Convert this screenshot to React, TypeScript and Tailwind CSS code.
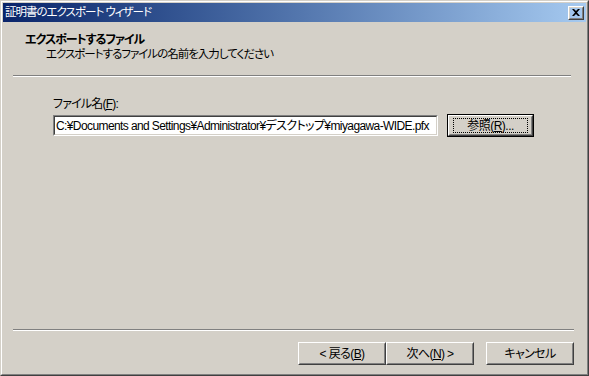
import React from 'react';

const font = {
  fontFamily: '"Liberation Sans", "Noto Sans CJK JP", sans-serif',
  fontFeatureSettings: '"palt"',
};

// Win2000 style push button
const Btn = ({ children, className = '' }: { children: React.ReactNode; className?: string }) => (
  <div className={`border border-t-white border-l-white border-r-[#404040] border-b-[#404040] ${className}`}>
    <div className="h-full w-full border border-t-[#d4d0c8] border-l-[#d4d0c8] border-r-[#808080] border-b-[#808080] flex items-center justify-center text-[12px] text-black whitespace-nowrap">
      {children}
    </div>
  </div>
);

export default function App() {
  return (
    <div
      style={font}
      className="w-[589px] h-[376px] bg-[#d4d0c8] border-t border-l border-t-[#d4d0c8] border-l-[#d4d0c8] border-r border-b border-r-[#404040] border-b-[#404040] overflow-hidden"
    >
      <div className="h-full w-full border border-t-white border-l-white border-r-[#808080] border-b-[#808080] p-px flex flex-col">
        {/* title bar */}
        <div className="h-[19px] flex items-center justify-between pl-[2px] pr-[2px] bg-gradient-to-r from-[#0a246a] to-[#a6caf0]">
          <span className="text-white text-[11.5px] leading-none tracking-[-1px]">証明書のエクスポート ウィザード</span>
          <Btn className="w-[16px] h-[14px]">
            <svg width="8" height="7" viewBox="0 0 8 7">
              <path d="M0 0h2l2 2 2-2h2L5 3.5 8 7H6L4 5 2 7H0l3-3.5z" fill="#000" />
            </svg>
          </Btn>
        </div>

        {/* header */}
        <div className="pl-[22px] pt-[11px] h-[53px]">
          <div className="text-[12px] font-bold leading-[14px] text-black tracking-[-1px]">エクスポートするファイル</div>
          <div className="text-[11.5px] leading-[14px] text-black pl-[21px] tracking-[-1px]">エクスポートするファイルの名前を入力してください</div>
        </div>
        <div className="mx-[10px] mr-[15px] border-t border-t-[#808080] border-b border-b-white" />

        {/* body */}
        <div className="flex-1 pl-[50px] pt-[20px]">
          <div className="text-[12px] leading-[14px] text-black tracking-[-0.8px]">
            ファイル名(<span className="underline">F</span>):
          </div>
          <div className="flex items-center mt-[3px]">
            <div className="w-[385px] h-[21px] border border-t-[#808080] border-l-[#808080] border-r-white border-b-white">
              <div className="h-full w-full border border-t-[#404040] border-l-[#404040] border-r-[#d4d0c8] border-b-[#d4d0c8] bg-white flex items-center pl-[1px] overflow-hidden whitespace-nowrap text-[12px] text-black tracking-[-0.6px]">
                C:¥Documents and Settings¥Administrator¥デスクトップ¥miyagawa-WIDE.pfx
              </div>
            </div>
            <div className="ml-[9px] w-[87px] h-[23px] border border-black">
              <Btn className="h-full w-full">
                <span className="border border-dotted border-black w-[75px] h-[15px] flex items-center justify-center tracking-[-0.5px]">
                  参照(<span className="underline">R</span>)...
                </span>
              </Btn>
            </div>
          </div>
        </div>

        {/* footer */}
        <div className="mx-[10px] mr-[12px] border-t border-t-[#808080] border-b border-b-white" />
        <div className="flex justify-end pr-[12px] pt-[11px] pb-[8px] tracking-[-0.6px]">
          <Btn className="w-[88px] h-[23px]">&lt; 戻る(<span className="underline">B</span>)</Btn>
          <Btn className="w-[88px] h-[23px]">次へ(<span className="underline">N</span>) &gt;</Btn>
          <Btn className="w-[88px] h-[23px] ml-[12px]">キャンセル</Btn>
        </div>
      </div>
    </div>
  );
}
